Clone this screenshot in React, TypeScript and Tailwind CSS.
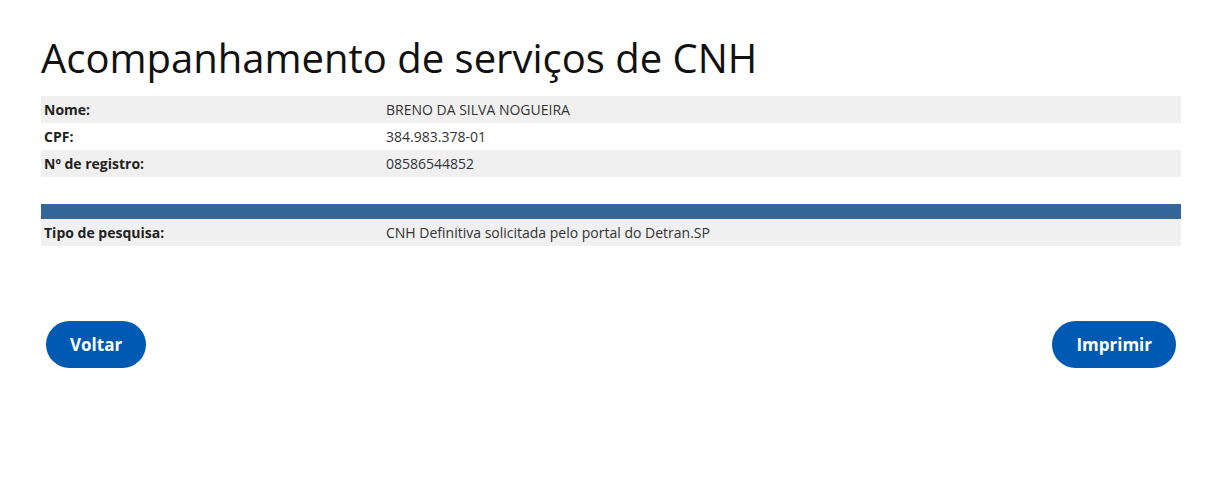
export default function App() {
  const rows = [
    { label: 'Nome:', value: 'BRENO DA SILVA NOGUEIRA', shaded: true },
    { label: 'CPF:', value: '384.983.378-01', shaded: false },
    { label: 'Nº de registro:', value: '08586544852', shaded: true },
  ];

  return (
    <div className="min-h-screen bg-white font-['Open_Sans',sans-serif] text-[#212529]">
      <div className="ml-[41px] w-[1140px] pt-[34px]">
        {/* Title */}
        <h1 className="text-[40px] leading-[48px] font-normal text-[#111] mb-[14px]">
          Acompanhamento de serviços de CNH
        </h1>

        {/* Personal data */}
        <div className="text-sm">
          {rows.map((r) => (
            <div
              key={r.label}
              className={['flex h-[27px] items-center', r.shaded ? 'bg-[#f0f0f0]' : 'bg-white'].join(' ')}
            >
              <div className="w-[30%] px-[3px] font-bold text-[#222]">{r.label}</div>
              <div className="flex-1 px-[3px] text-[#333]">{r.value}</div>
            </div>
          ))}

          <div className="h-[27px]" />

          {/* Section bar */}
          <div className="h-[15px] bg-[#336699]" />
          <div className="flex h-[27px] items-center bg-[#f0f0f0]">
            <div className="w-[30%] px-[3px] font-bold text-[#222]">Tipo de pesquisa:</div>
            <div className="flex-1 px-[3px] text-[#333]">CNH Definitiva solicitada pelo portal do Detran.SP</div>
          </div>
        </div>

        {/* Actions */}
        <div className="flex justify-between px-[5px] mt-[75px]">
          <button className="h-[47px] px-6 rounded-full bg-[#0059b3] text-white text-[17px] font-bold">
            Voltar
          </button>
          <button className="h-[47px] px-6 rounded-full bg-[#0059b3] text-white text-[17px] font-bold">
            Imprimir
          </button>
        </div>
      </div>
    </div>
  );
}
